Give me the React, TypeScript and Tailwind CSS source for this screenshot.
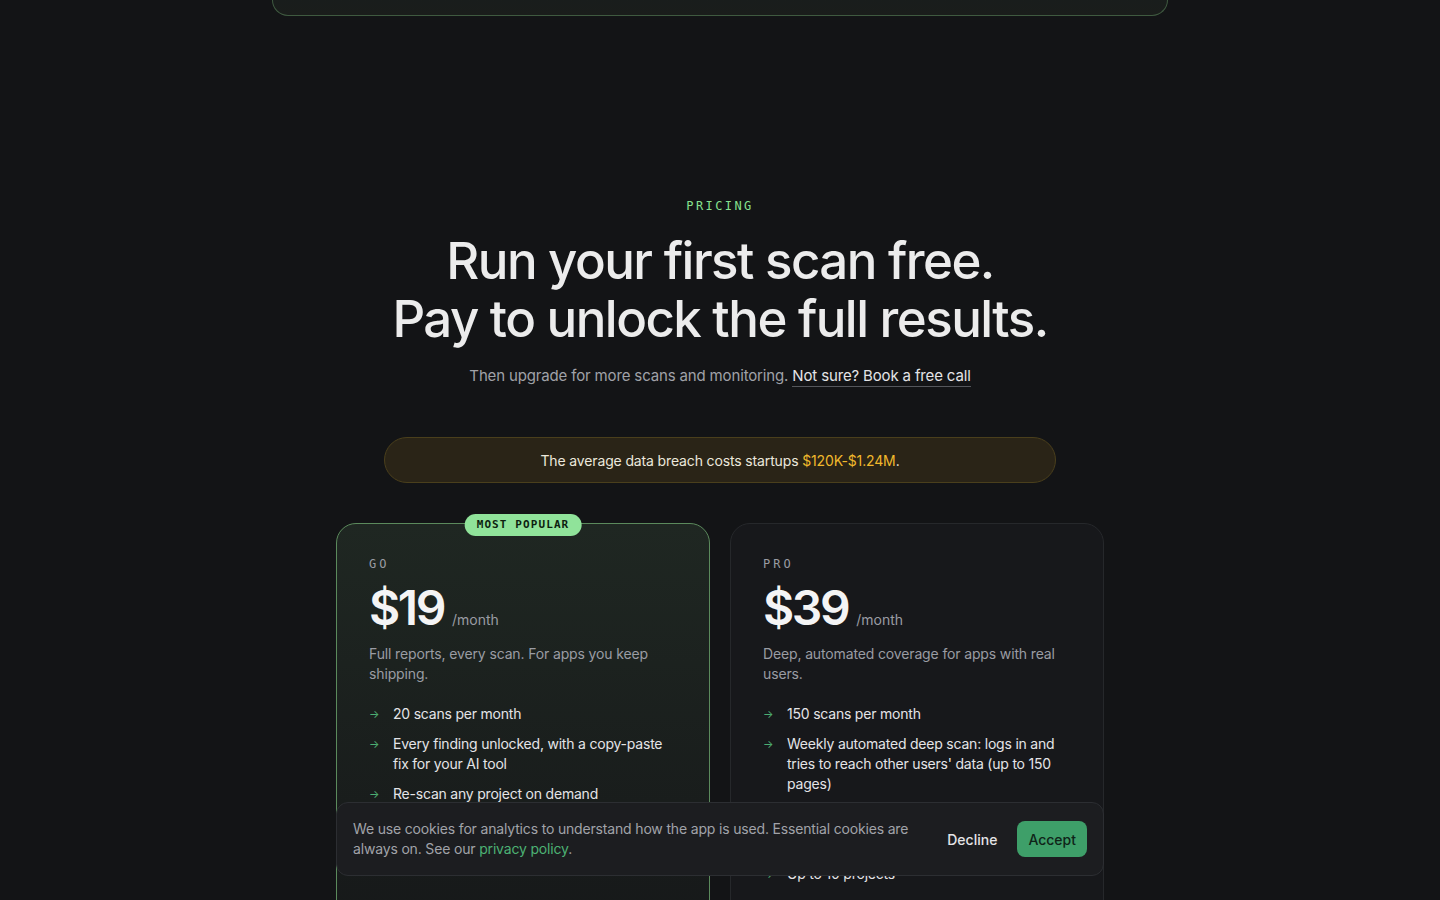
import React from "react";

const sans = { fontFamily: '"Inter", "Liberation Sans", sans-serif' };
const mono = { fontFamily: '"DejaVu Sans Mono", "Liberation Mono", monospace' };

function Feature({ children }: { children: React.ReactNode }) {
  return (
    <li className="flex gap-[10px] text-[14px] leading-[20px] tracking-[-0.015em] text-[#e4e4e7]">
      <span className="w-[14px] shrink-0 text-[11px] text-[#4caf72]">→</span>
      <span>{children}</span>
    </li>
  );
}

export default function App() {
  return (
    <div className="min-h-screen bg-[#131416] text-white" style={sans}>
      <div className="mx-auto h-[16px] w-[896px] rounded-b-[24px] border-x border-b border-[#3f5a40] bg-gradient-to-b from-[#191d1c] to-[#1a1d1b]" />

      <section className="mx-auto flex w-[768px] flex-col items-center pt-[181px]">
        <div className="text-[12px] tracking-[0.2em] text-[#86e08f]" style={mono}>
          PRICING
        </div>
        <h2 className="mt-[17px] text-center text-[51px] font-medium leading-[58px] tracking-[-0.03em] text-[#ececec]">
          Run your first scan free.
          <br />
          Pay to unlock the full results.
        </h2>
        <p className="mt-[16px] text-[15px] leading-[24px] tracking-[-0.01em] text-[#a0a2a8]">
          Then upgrade for more scans and monitoring.{" "}
          <a className="border-b border-[#55575c] pb-[1px] text-[#e4e4e7]">Not sure? Book a free call</a>
        </p>

        <div className="mt-[49px] flex h-[46px] w-[672px] items-center justify-center rounded-full border border-[#4a3f1c] bg-[#2a2417] text-[14px] tracking-[-0.01em] text-[#ece8dc]">
          The average data breach costs startups&nbsp;<span className="text-[#f0b82c]">$120K-$1.24M</span>.
        </div>

        <div className="mt-[40px] grid w-[768px] grid-cols-2 gap-[20px]">
          <div className="relative rounded-[20px] border border-[#5b8a5c] bg-gradient-to-b from-[#1f2722] to-[#161819] px-[32px] pt-[32px] pb-[60px]">
            <div
              className="absolute left-1/2 top-[-10px] -translate-x-1/2 rounded-full bg-[#90e39a] px-[12px] py-[3px] text-[11px] font-bold leading-[16px] tracking-[0.1em] text-[#0d1f10]"
              style={mono}
            >
              MOST POPULAR
            </div>
            <div className="text-[12px] leading-[16px] tracking-[0.25em] text-[#9a9ca3]" style={mono}>
              GO
            </div>
            <div className="mt-[12px] flex items-baseline gap-[8px]">
              <span className="text-[48px] font-semibold leading-[48px] tracking-[-0.05em] text-[#f4f4f5]">$19</span>
              <span className="text-[14px] text-[#9a9ca3]">/month</span>
            </div>
            <p className="mt-[12px] text-[14px] leading-[20px] tracking-[-0.01em] text-[#9a9ca3]">
              Full reports, every scan. For apps you keep shipping.
            </p>
            <ul className="mt-[20px] flex flex-col gap-[10px]">
              <Feature>20 scans per month</Feature>
              <Feature>Every finding unlocked, with a copy-paste fix for your AI tool</Feature>
              <Feature>Re-scan any project on demand</Feature>
              <Feature>Shareable report links</Feature>
              <Feature>Up to 3 projects</Feature>
            </ul>
          </div>

          <div className="rounded-[20px] border border-[#26282b] bg-[#17181b] px-[32px] pt-[32px] pb-[60px]">
            <div className="text-[12px] leading-[16px] tracking-[0.25em] text-[#9a9ca3]" style={mono}>
              PRO
            </div>
            <div className="mt-[12px] flex items-baseline gap-[8px]">
              <span className="text-[48px] font-semibold leading-[48px] tracking-[-0.05em] text-[#f4f4f5]">$39</span>
              <span className="text-[14px] text-[#9a9ca3]">/month</span>
            </div>
            <p className="mt-[12px] text-[14px] leading-[20px] tracking-[-0.01em] text-[#9a9ca3]">
              Deep, automated coverage for apps with real users.
            </p>
            <ul className="mt-[20px] flex flex-col gap-[10px]">
              <Feature>150 scans per month</Feature>
              <Feature>Weekly automated deep scan: logs in and tries to reach other users' data (up to 150 pages)</Feature>
              <Feature>Everything in Go</Feature>
              <Feature>Priority support</Feature>
              <Feature>Up to 10 projects</Feature>
            </ul>
          </div>
        </div>
      </section>

      <div className="fixed bottom-[24px] left-1/2 flex w-[768px] -translate-x-1/2 items-center rounded-[12px] border border-[#2c2e32] bg-[#1c1d20] py-[16px] pl-[16px] pr-[16px]">
        <p className="mr-[16px] flex-1 text-[14px] leading-[20px] tracking-[-0.012em] text-[#a1a3a9]">
          We use cookies for analytics to understand how the app is used. Essential cookies are always on. See our{" "}
          <a className="text-[#4cb274]">privacy policy</a>.
        </p>
        <button className="px-[12px] text-[14px] font-medium text-[#e4e4e7]">Decline</button>
        <button className="ml-[8px] h-[36px] rounded-[8px] bg-[#3e9f69] px-[11px] text-[14px] font-medium text-[#0f2418]">
          Accept
        </button>
      </div>
    </div>
  );
}
